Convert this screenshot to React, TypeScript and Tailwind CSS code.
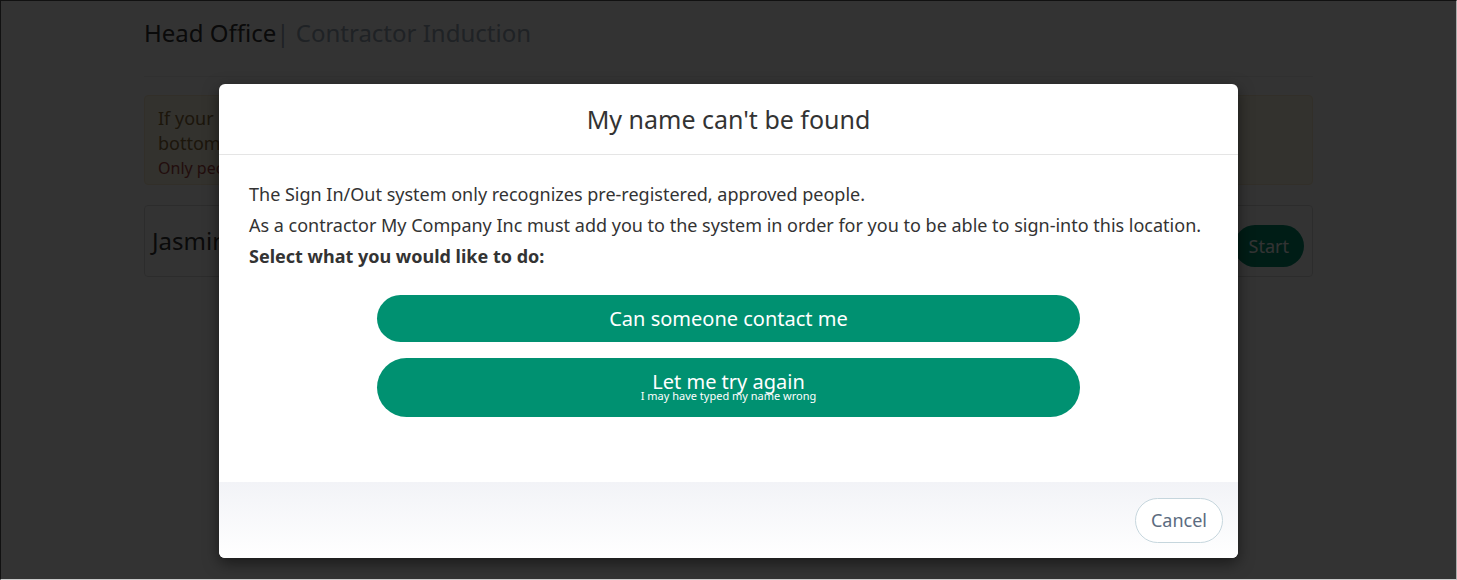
import React from "react";

const FONT = "font-['Noto_Sans',_'Open_Sans',_sans-serif]";

const BackgroundPage = () => {
  return (
    <div className="bg-white w-full h-full">
      <div className="w-[1169px] ml-[143px] pt-[16px]">
        <h1 className="text-[24px] leading-[32px] text-[#333]">
          Head Office<span className="text-[#9aa8b8]">| Contractor Induction</span>
        </h1>
        <div className="mt-[27px] border-t border-[#eee]" />
        <div className="mt-[18px] bg-[#fcf8e3] border border-[#faebcc] rounded px-[13px] pt-[10px] pb-[8px] h-[90px]">
          <p className="text-[18px] leading-[25px] text-[#8a6d3b]">
            If your name does not appear in the list, please check the spelling of your name or use the button at the
            <br />
            bottom of this page to let us know.
          </p>
          <p className="text-[16px] leading-[24px] text-[#a94442]">
            Only people who have been approved by the company can sign in.
          </p>
        </div>
        <div className="mt-[20px] border border-[#ddd] rounded h-[72px] flex items-center justify-between pl-[7px] pr-[8px]">
          <span className="text-[24px] text-[#333]">Jasmine Taylor</span>
          <button className="bg-[#009171] text-white text-[18px] rounded-full h-[42px] px-[15px] mt-[10px]">
            Start
          </button>
        </div>
      </div>
    </div>
  );
};

const NameNotFoundModal = () => {
  return (
    <div className="w-[1019px] h-[474px] bg-white rounded-[6px] shadow-[0_5px_15px_rgba(0,0,0,0.5)] flex flex-col overflow-hidden">
      <div className="h-[71px] border-b border-[#e5e5e5] flex items-center justify-center">
        <h4 className="text-[25px] text-[#333] leading-none">My name can't be found</h4>
      </div>
      <div className="flex-1 px-[30px] pt-[24px] text-[18px] text-[#333]">
        <p className="leading-[31px]">
          The Sign In/Out system only recognizes pre-registered, approved people.
        </p>
        <p className="leading-[31px]">
          As a contractor My Company Inc must add you to the system in order for you to be able to sign-into this location.
        </p>
        <p className="leading-[31px] font-bold">Select what you would like to do:</p>
        <div className="mt-[23px] flex flex-col items-center gap-[16px]">
          <button className="w-[703px] h-[47px] rounded-full bg-[#009171] text-white text-[20px] flex items-center justify-center">
            Can someone contact me
          </button>
          <button className="w-[703px] h-[59px] rounded-full bg-[#009171] text-white flex flex-col items-center justify-center pb-[2px]">
            <span className="text-[20px] leading-[18px]">Let me try again</span>
            <span className="text-[11px] leading-[10px]">I may have typed my name wrong</span>
          </button>
        </div>
      </div>
      <div className="h-[76px] bg-gradient-to-b from-[#f2f3f7] to-white flex items-start justify-end pt-[16px] pr-[15px]">
        <button className="h-[45px] px-[15px] rounded-full border border-[#c6d6dd] bg-white text-[18px] text-[#5b6b80]">
          Cancel
        </button>
      </div>
    </div>
  );
};

export default function App() {
  return (
    <div
      className={`${FONT} relative w-[1457px] h-[580px] overflow-hidden border-t border-l border-[#111] border-r border-b border-r-[#aaa] border-b-[#ccc]`}
    >
      <BackgroundPage />
      <div className="absolute inset-0 bg-black/80 flex justify-center pt-[83px]">
        <NameNotFoundModal />
      </div>
    </div>
  );
}
